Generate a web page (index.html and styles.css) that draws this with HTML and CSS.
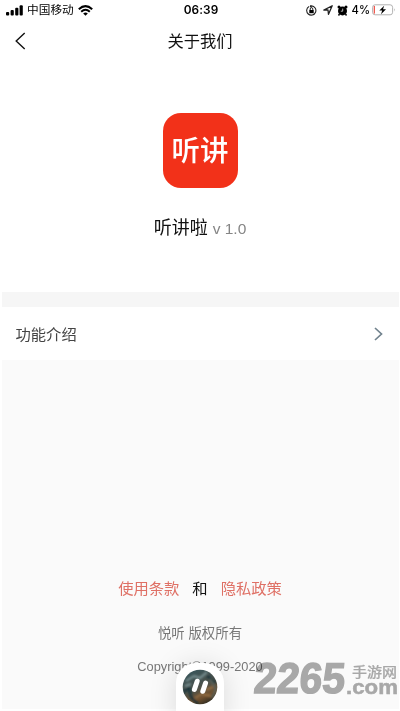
FILE: index.html
```html
<!DOCTYPE html>
<html lang="zh-CN">
<head>
<meta charset="utf-8">
<title>关于我们</title>
<link rel="stylesheet" href="styles.css">
</head>
<body>
<div class="screen">
  <header class="status">
    <div class="status-left">
      <svg class="signal" width="17" height="11" viewBox="0 0 17 11"><rect x="0" y="7" width="3.2" height="3.5" rx="1"/><rect x="4.6" y="5" width="3.2" height="5.5" rx="1"/><rect x="9.2" y="2.8" width="3.2" height="7.7" rx="1"/><rect x="13.6" y=".3" width="3.2" height="10.2" rx="1"/></svg>
      <span class="carrier">中国移动</span>
      <svg width="15" height="11" viewBox="0 0 15 11"><g fill="none" stroke="#000" stroke-width="2"><path d="M.8 4.2Q7.500-2 14.200 4.200M3.200 6.700Q7.500 2.800 11.800 6.700"/></g><path d="M5.200 8.500Q7.500 6.500 9.800 8.500L7.500 10.800Z"/></svg>
    </div>
    <span class="time">06:39</span>
    <div class="status-right">
      <svg width="11" height="11" viewBox="0 0 11 11"><path d="M3 1.500A4.600 4.600 0 1 0 5.500.9L4 .9M4 .9L5.500 2.500" fill="none" stroke="#222" stroke-width="1.100"/><rect x="3.300" y="5" width="4.400" height="3.200"/><path d="M4.200 5V4a1.300 1.300 0 0 1 2.600 0V5" fill="none" stroke="#222"/></svg>
      <svg class="location" width="10" height="10" viewBox="0 0 10 10"><path d="M.8 5L9.200.8 5.500 9.300 5 5Z" fill="none" stroke="#222" stroke-width="1.300" stroke-linejoin="round"/></svg>
      <svg class="alarm" width="11" height="11" viewBox="0 0 11 11"><circle cx="5.500" cy="5.900" r="4.500"/><circle cx="2" cy="2" r="1.500"/><circle cx="9" cy="2" r="1.500"/><path d="M2.500 9L1.500 10.500M8.500 9L9.500 10.500" stroke="#000" stroke-width="1.400"/><path d="M5.700 3.600V6.200H3.800" fill="none" stroke="#fff" stroke-width=".7"/></svg>
      <span class="percent">4%</span>
      <svg width="24" height="12" viewBox="0 0 24 12"><rect x=".6" y=".8" width="20" height="10" rx="2.500" fill="none" stroke="#aaa" stroke-width=".9"/><rect x="1.700" y="2" width="1.300" height="7.600" fill="#f05a50"/><path d="M22 4.200Q23.500 5.800 22 7.500Z" fill="#aaa"/><path d="M12.200 1.800L7.300 6.500H10.200L9 10.200 14 5.300H11Z"/></svg>
    </div>
  </header>
  <nav class="nav">
    <svg class="back" width="11" height="18" viewBox="0 0 11 18"><path d="M9.700 1L1.200 9l8.500 8" fill="none" stroke="#111" stroke-width="1.400"/></svg>
    <h1 class="title">关于我们</h1>
  </nav>
  <section class="about">
    <div class="logo"><span class="logo-text">听讲</span></div>
    <div class="app"><span class="name">听讲啦</span><span class="version">v 1.0</span></div>
  </section>
  <div class="divider"></div>
  <div class="row">
    <span class="row-label">功能介绍</span>
    <svg width="9" height="14" viewBox="0 0 9 14"><path d="M1 1l6.500 6L1 13" fill="none" stroke="#71828d" stroke-width="1.700"/></svg>
  </div>
  <footer class="footer">
    <div class="links"><a class="link">使用条款</a><span>和</span><a class="link">隐私政策</a></div>
    <p class="owner">悦听 版权所有</p>
    <p class="copyright">Copyright©1999-2020</p>
  </footer>
  <div class="player">
    <svg width="36" height="36" viewBox="0 0 36 36">
      <defs>
        <linearGradient id="cover" x1=".2" y1="0" x2=".7" y2="1"><stop offset="0" stop-color="#35545b"/><stop offset=".5" stop-color="#4b514b"/><stop offset=".78" stop-color="#70502f"/><stop offset="1" stop-color="#252720"/></linearGradient>
        <clipPath id="disc"><circle cx="18" cy="18" r="17.300"/></clipPath>
        <filter id="soft"><feGaussianBlur stdDeviation=".8"/></filter>
      </defs>
      <g clip-path="url(#disc)">
        <rect width="36" height="36" fill="url(#cover)"/>
        <g filter="url(#soft)" fill="none" stroke-width="2"><path d="M4 12L12 7 18 9 25 3M3 17L9 15" stroke="#7d9598"/><path d="M0 24L7 19 9 28 16 35M25 7L34 14" stroke="#102e37"/><path d="M13 29L20 25 29 27M24 21L31 18" stroke="#987044"/><path d="M28 10L34 20 30 29" stroke="#59635b"/></g>
      </g>
      <path d="M15.200 12.200L12.400 20.500M23.600 14L20.800 22.300" stroke="#fff" stroke-width="5" stroke-linecap="round"/>
    </svg>
  </div>
  <div class="watermark">
    <svg width="150" height="40" viewBox="250 658 150 40">
      <g fill="#acacac" stroke="#acacac">
        <text class="mark-number" transform="translate(253 693) skewX(-5)" textLength="91" lengthAdjust="spacingAndGlyphs" stroke-width="1.400">2265</text>
        <text class="mark-domain" x="346" y="693.500" textLength="52" lengthAdjust="spacingAndGlyphs" stroke-width=".5">.com</text>
        <text class="mark-site" x="352" y="677" textLength="45" lengthAdjust="spacingAndGlyphs" stroke-width=".2">手游网</text>
      </g>
    </svg>
  </div>
</div>
</body>
</html>
```
FILE: styles.css
```css
* { box-sizing: border-box; }
body {
  margin: 0;
  background: #fff;
  font-family: "Liberation Sans", "Noto Sans CJK SC", sans-serif;
}
svg { display: block; flex: none; }
h1, p { margin: 0; font-weight: 400; }
.screen {
  position: relative;
  display: flex;
  flex-direction: column;
  width: 400px;
  height: 711px;
  overflow: hidden;
  background: #fff;
}
.status {
  display: grid;
  grid-template-columns: 1fr auto 1fr;
  align-items: center;
  height: 20px;
  padding: 0 4px 0 6px;
  color: #000;
}
.status-left, .status-right { display: flex; align-items: center; }
.status-right { justify-content: flex-end; }
.carrier { margin: 0 4px 0 4px; font-size: 11.7px; line-height: 18px; }
.time { font: 600 11.8px/20px Inter, sans-serif; letter-spacing: .1px; }
.location { margin-left: 6px; }
.alarm { margin-left: 4px; }
.percent { margin: 0 2px 0 4px; font: 500 11.2px/20px Inter, sans-serif; }
.nav {
  display: grid;
  grid-template-columns: 50px 1fr 50px;
  align-items: center;
  height: 42px;
}
.back { margin-left: 15px; }
.title { font-size: 16.3px; line-height: 24px; text-align: center; color: #111; }
.about {
  display: flex;
  flex-direction: column;
  align-items: center;
  height: 230px;
  padding-top: 51px;
}
.logo {
  display: flex;
  align-items: center;
  justify-content: center;
  width: 75px;
  height: 75px;
  border-radius: 18px;
  background: #f23119;
  color: #fff;
}
.logo-text { font-size: 28.5px; font-weight: 500; line-height: 40px; }
.app { display: flex; align-items: baseline; gap: 5px; margin-top: 26px; line-height: 28px; }
.name { font-size: 18px; color: #111; }
.version { font-size: 15.5px; color: #858585; }
.divider { height: 15px; margin: 0 1px 0 2px; background: #f6f6f6; }
.row {
  display: flex;
  align-items: center;
  justify-content: space-between;
  height: 53px;
  padding: 0 17px 0 15.5px;
  font-size: 15.3px;
  color: #444;
}
.row-label { padding-bottom: 2px; }
.footer {
  display: flex;
  flex-direction: column;
  align-items: center;
  height: 349px;
  margin: 0 1px 0 2px;
  padding-top: 216px;
  background: #fafafa;
}
.links { display: flex; gap: 13px; margin-right: 1px; font-size: 15.3px; line-height: 26px; color: #111; }
.link { color: #df7065; }
.owner { margin: 21px 1px 0 0; font-size: 13.4px; line-height: 22px; color: #777; }
.copyright { margin: 11px 1px 0 0; font-size: 12.8px; line-height: 22px; color: #777; }
.player {
  position: absolute;
  left: 176px;
  top: 663px;
  display: flex;
  justify-content: center;
  width: 48px;
  height: 60px;
  padding-top: 6px;
  border-radius: 20px 20px 0 0;
  background: #fff;
  box-shadow: 0 2px 28px rgba(0, 0, 0, .13);
}
.watermark { position: absolute; left: 250px; top: 658px; mix-blend-mode: multiply; }
.mark-number { font: 700 43px "Liberation Sans", sans-serif; }
.mark-domain { font: 700 20.5px "Liberation Sans", sans-serif; }
.mark-site { font: 500 14px "Noto Sans CJK SC", sans-serif; }
```
